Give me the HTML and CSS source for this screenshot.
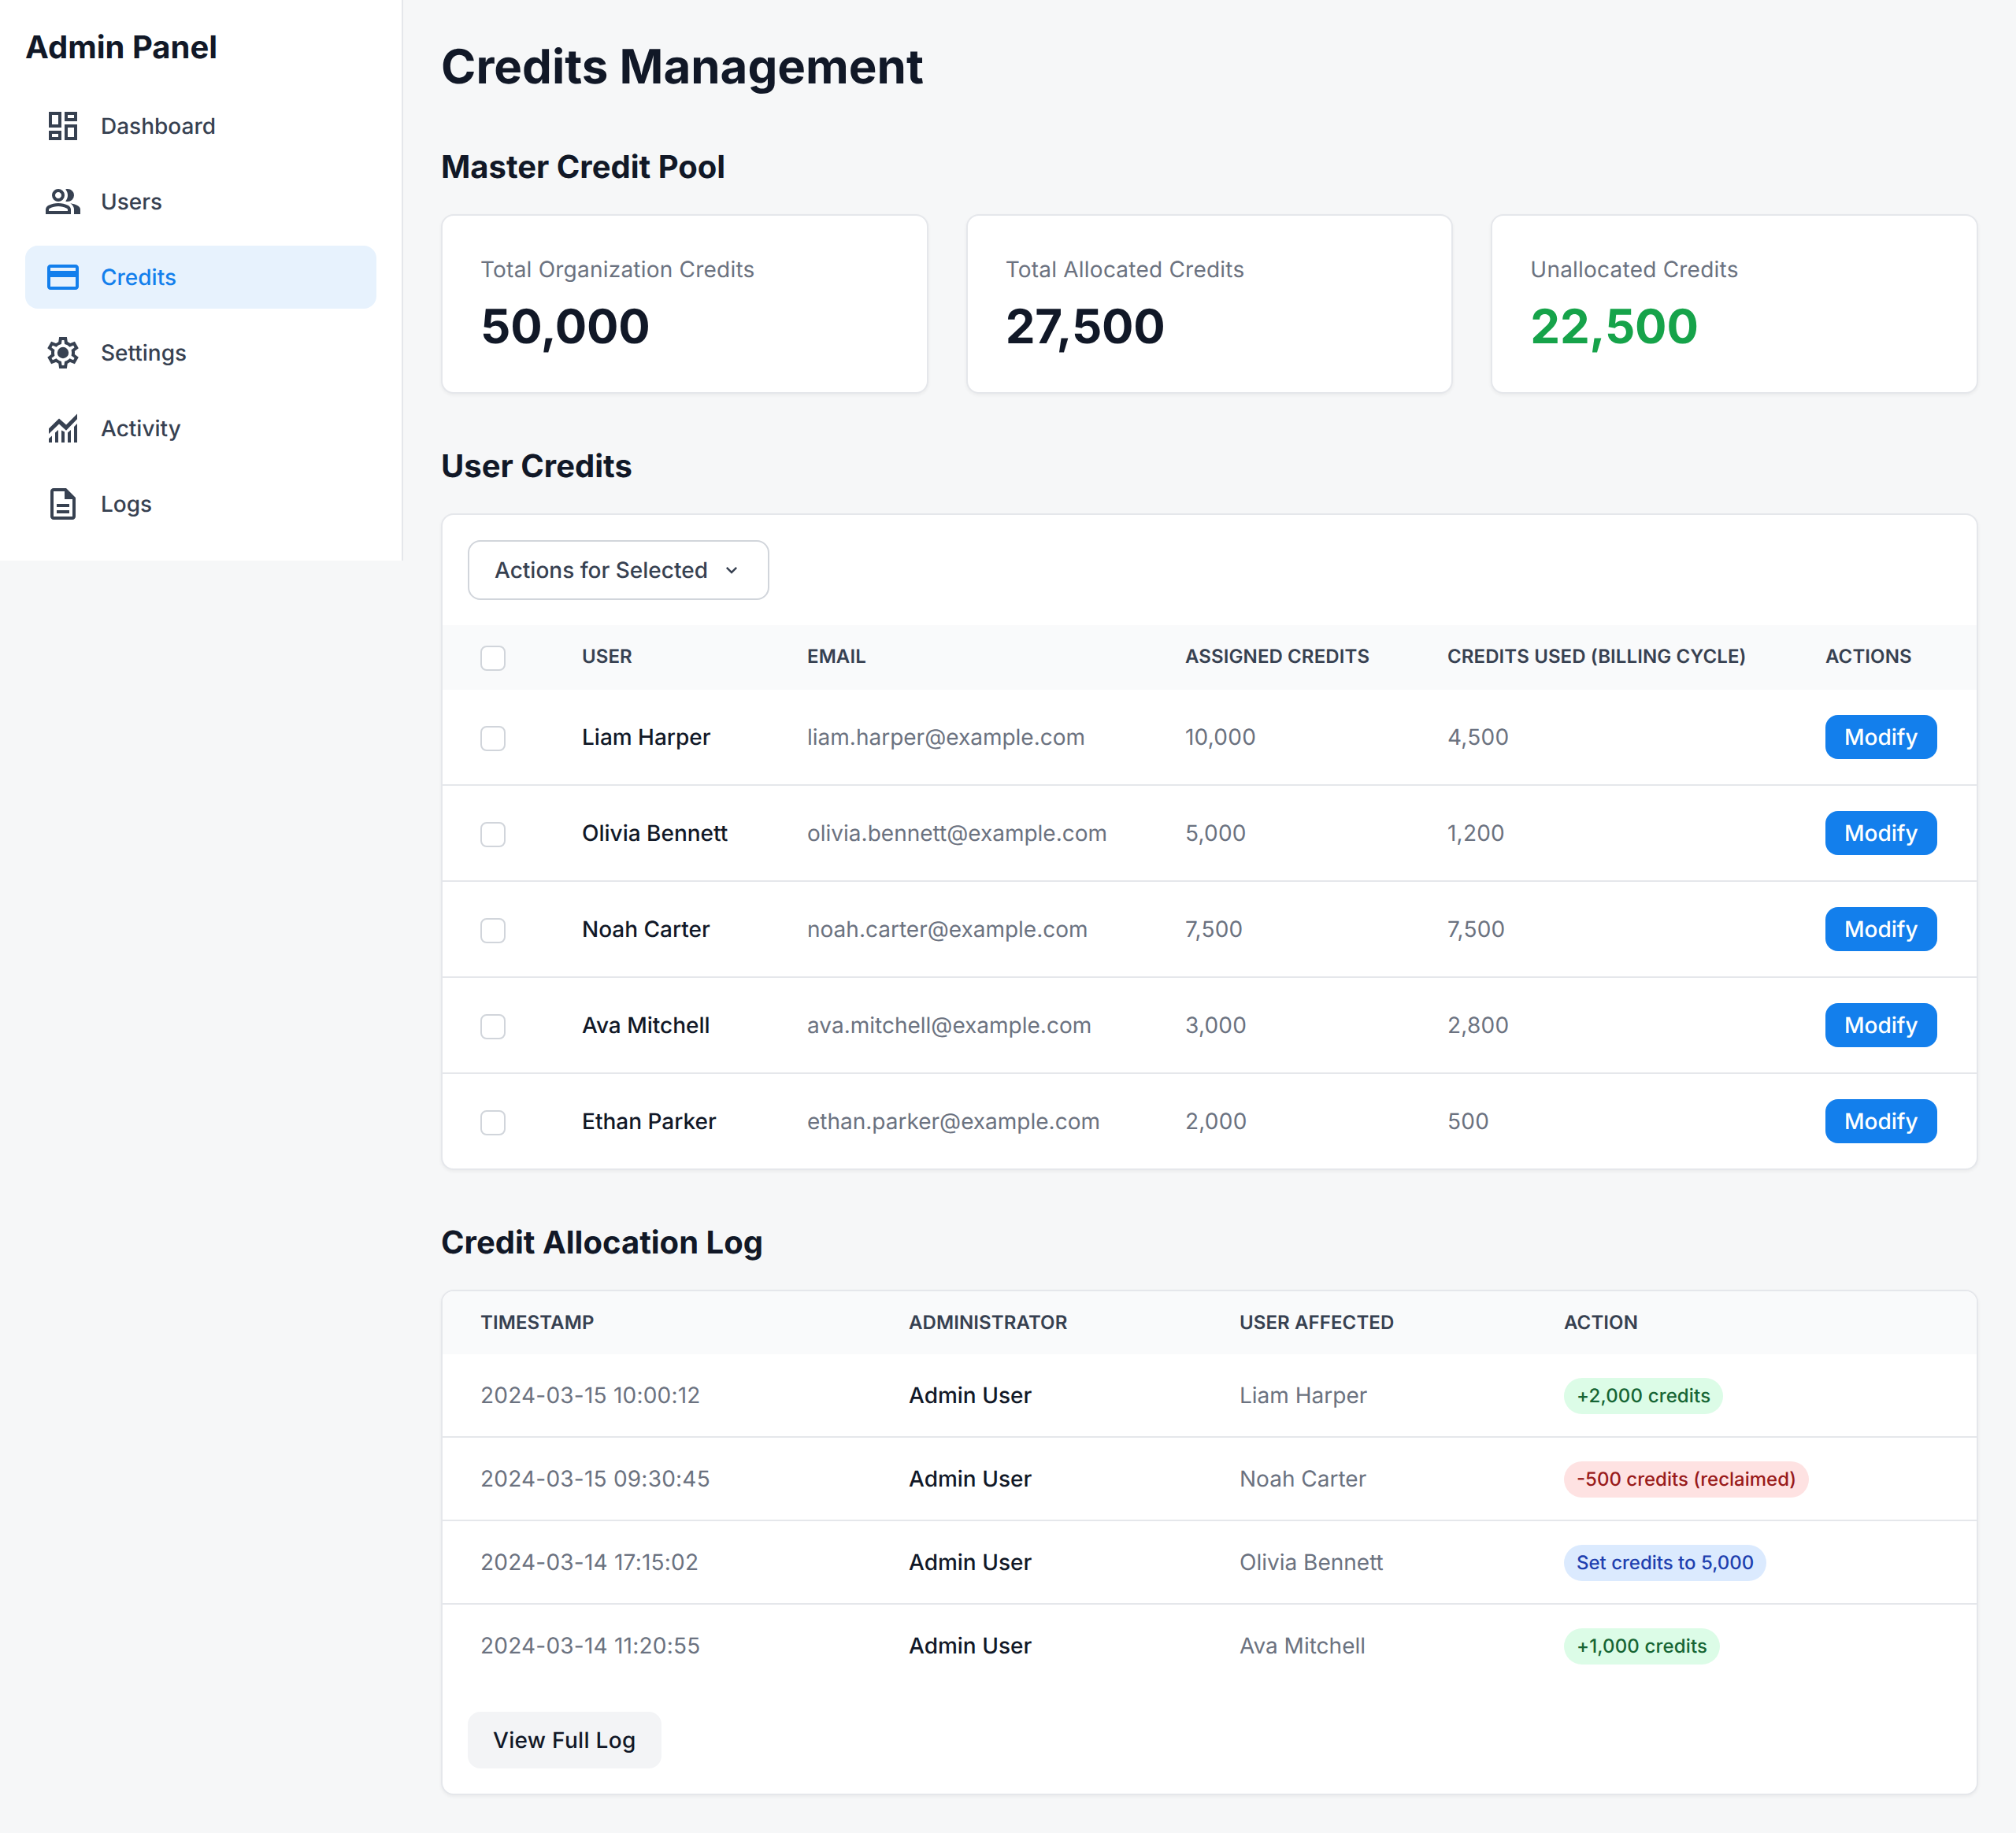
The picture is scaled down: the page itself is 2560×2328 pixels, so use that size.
FILE: index.html
```html
<!DOCTYPE html>
<html lang="en">
<head>
<meta charset="utf-8">
<title>Credits Management</title>
<link rel="stylesheet" href="styles.css">
</head>
<body>
<div class="layout">
  <aside class="sidebar">
    <div class="brand">Admin Panel</div>
    <nav class="nav">
      <a class="nav-item"><svg class="nav-icon" viewBox="0 0 24 24"><path d="M19 5v2h-4V5h4M9 5v6H5V5h4m10 8v6h-4v-6h4M9 17v2H5v-2h4M21 3h-8v6h8V3zM11 3H3v10h8V3zm10 8h-8v10h8V11zm-10 4H3v6h8v-6z"/></svg><span>Dashboard</span></a>
      <a class="nav-item"><svg class="nav-icon" viewBox="0 -960 960 960"><path d="M40-160v-112q0-34 17.5-62.5T104-378q62-31 126-46.5T360-440q66 0 130 15.5T616-378q29 15 46.5 43.5T680-272v112H40Zm720 0v-120q0-44-24.5-84.5T666-434q51 6 96 20.5t84 35.5q36 20 55 44.5t19 53.5v120H760ZM360-480q-66 0-113-47t-47-113q0-66 47-113t113-47q66 0 113 47t47 113q0 66-47 113t-113 47Zm400-160q0 66-47 113t-113 47q-11 0-28-2.5t-28-5.5q27-32 41.5-71t14.5-81q0-42-14.5-81T544-792q14-5 28-6.5t28-1.5q66 0 113 47t47 113ZM120-240h480v-32q0-11-5.5-20T580-306q-54-27-109-40.5T360-360q-56 0-111 13.5T140-306q-9 5-14.5 14t-5.5 20v32Zm240-320q33 0 56.5-23.5T440-640q0-33-23.5-56.5T360-720q-33 0-56.5 23.5T280-640q0 33 23.5 56.5T360-560Z"/></svg><span>Users</span></a>
      <a class="nav-item active"><svg class="nav-icon" viewBox="0 -960 960 960"><path d="M880-720v480q0 33-23.5 56.5T800-160H160q-33 0-56.5-23.5T80-240v-480q0-33 23.5-56.5T160-800h640q33 0 56.5 23.5T880-720ZM160-640h640v-80H160v80Zm0 160v240h640v-240H160Z"/></svg><span>Credits</span></a>
      <a class="nav-item"><svg class="nav-icon" viewBox="0 0 24 24"><path fill-rule="evenodd" d="M19.44 12.99l-.01.02c.04-.33.08-.67.08-1.01 0-.34-.03-.66-.07-.99l.01.02 2.44-1.92-2.43-4.22-2.87 1.16.01.01c-.52-.4-1.09-.74-1.71-1h.01L14.44 2H9.57l-.44 3.07h.01c-.62.26-1.19.6-1.71 1l.01-.01-2.88-1.17-2.44 4.22 2.44 1.92.01-.02c-.04.33-.07.65-.07.99 0 .34.03.68.08 1.01l-.01-.02-2.1 1.65-.33.26 2.43 4.2 2.88-1.15-.02-.04c.53.41 1.1.75 1.73 1.01h-.03L9.58 22h4.85s.03-.18.06-.42l.38-2.65h-.01c.62-.26 1.2-.6 1.73-1.01l-.02.04 2.88 1.15 2.43-4.2s-.14-.12-.33-.26l-2.11-1.66zM17.45 11.27c.04.31.05.52.05.73 0 .21-.02.43-.05.73l-.14 1.13.89.7 1.08.84-.7 1.21-1.27-.51-1.04-.42-.9.68c-.43.32-.84.56-1.25.73l-1.06.43-.16 1.13-.2 1.35h-1.4l-.19-1.35-.16-1.13-1.06-.43c-.43-.18-.83-.41-1.23-.71l-.91-.7-1.06.43-1.27.51-.7-1.21 1.08-.84.89-.7-.14-1.13c-.03-.31-.05-.54-.05-.74s.02-.43.05-.73l.14-1.13-.89-.7-1.08-.84.7-1.21 1.27.51 1.04.42.9-.68c.43-.32.84-.56 1.25-.73l1.06-.43.16-1.13.2-1.35h1.39l.19 1.35.16 1.13 1.06.43c.43.18.83.41 1.23.71l.91.7 1.06-.43 1.27-.51.7 1.21-1.07.85-.89.7.14 1.13z"/><circle cx="12" cy="12" r="3.6"/></svg><span>Settings</span></a>
      <a class="nav-item"><svg class="nav-icon" viewBox="0 -960 960 960"><path d="M120-120v-100l80-70v170h-80Zm160 0v-250l80-70v320h-80Zm160 0v-310l80 40v270h-80Zm160 0v-250l80-70v320h-80Zm160 0v-400l80-80v480h-80ZM120-340v-133l260-257 180 160 280-280v133L560-427 380-590 120-340Z"/></svg><span>Activity</span></a>
      <a class="nav-item"><svg class="nav-icon" viewBox="0 -960 960 960"><path d="M320-240h320v-80H320v80Zm0-160h320v-80H320v80ZM240-80q-33 0-56.5-23.5T160-160v-640q0-33 23.5-56.5T240-880h320l240 240v480q0 33-23.5 56.5T720-80H240Zm280-520v-200H240v640h480v-440H520ZM240-800v200-200 640-640Z"/></svg><span>Logs</span></a>
    </nav>
  </aside>
  <main class="main">
    <h1 class="page-title">Credits Management</h1>

    <h2 class="section-title">Master Credit Pool</h2>
    <section class="stats">
      <div class="card stat"><div class="stat-label">Total Organization Credits</div><div class="stat-value">50,000</div></div>
      <div class="card stat"><div class="stat-label">Total Allocated Credits</div><div class="stat-value">27,500</div></div>
      <div class="card stat"><div class="stat-label">Unallocated Credits</div><div class="stat-value positive">22,500</div></div>
    </section>

    <h2 class="section-title spaced">User Credits</h2>
    <section class="card">
      <div class="toolbar">
        <button class="btn-outline">Actions for Selected<svg class="chevron" viewBox="0 0 24 24"><path d="M16.59 8.59 12 13.17 7.41 8.59 6 10l6 6 6-6z"/></svg></button>
      </div>
      <table class="table users">
        <colgroup><col class="u1"><col class="u2"><col class="u3"><col class="u4"><col class="u5"><col class="u6"></colgroup>
        <thead><tr><th class="check-cell"><span class="check"></span></th><th>User</th><th>Email</th><th>Assigned Credits</th><th>Credits Used (Billing Cycle)</th><th>Actions</th></tr></thead>
        <tbody>
          <tr><td><span class="check"></span></td><td class="strong">Liam Harper</td><td>liam.harper@example.com</td><td class="num">10,000</td><td class="num">4,500</td><td><button class="btn-primary">Modify</button></td></tr>
          <tr><td><span class="check"></span></td><td class="strong">Olivia Bennett</td><td>olivia.bennett@example.com</td><td class="num">5,000</td><td class="num">1,200</td><td><button class="btn-primary">Modify</button></td></tr>
          <tr><td><span class="check"></span></td><td class="strong">Noah Carter</td><td>noah.carter@example.com</td><td class="num">7,500</td><td class="num">7,500</td><td><button class="btn-primary">Modify</button></td></tr>
          <tr><td><span class="check"></span></td><td class="strong">Ava Mitchell</td><td>ava.mitchell@example.com</td><td class="num">3,000</td><td class="num">2,800</td><td><button class="btn-primary">Modify</button></td></tr>
          <tr><td><span class="check"></span></td><td class="strong">Ethan Parker</td><td>ethan.parker@example.com</td><td class="num">2,000</td><td class="num">500</td><td><button class="btn-primary">Modify</button></td></tr>
        </tbody>
      </table>
    </section>

    <h2 class="section-title spaced">Credit Allocation Log</h2>
    <section class="card">
      <table class="table log">
        <colgroup><col class="l1"><col class="l2"><col class="l3"><col class="l4"></colgroup>
        <thead><tr><th>Timestamp</th><th>Administrator</th><th>User Affected</th><th>Action</th></tr></thead>
        <tbody>
          <tr><td class="num">2024-03-15 10:00:12</td><td class="strong">Admin User</td><td>Liam Harper</td><td><span class="badge green">+2,000 credits</span></td></tr>
          <tr><td class="num">2024-03-15 09:30:45</td><td class="strong">Admin User</td><td>Noah Carter</td><td><span class="badge red">-500 credits (reclaimed)</span></td></tr>
          <tr><td class="num">2024-03-14 17:15:02</td><td class="strong">Admin User</td><td>Olivia Bennett</td><td><span class="badge blue">Set credits to 5,000</span></td></tr>
          <tr><td class="num">2024-03-14 11:20:55</td><td class="strong">Admin User</td><td>Ava Mitchell</td><td><span class="badge green">+1,000 credits</span></td></tr>
        </tbody>
      </table>
      <div class="card-footer"><button class="btn-muted">View Full Log</button></div>
    </section>
  </main>
</div>
</body>
</html>
```
FILE: styles.css
```css
* { box-sizing: border-box; }
html, body { margin: 0; padding: 0; }
body {
  background: #f6f7f8;
  color: #111827;
  font-family: Inter, "Liberation Sans", sans-serif;
  font-size: 28px;
  text-rendering: geometricPrecision;
}
button { font-family: inherit; text-rendering: inherit; cursor: pointer; }

.layout { display: flex; align-items: flex-start; }

.sidebar {
  flex: 0 0 512px;
  width: 512px;
  padding: 32px;
  background: #fff;
  border-right: 2px solid #e5e7eb;
}
.brand {
  font-size: 40px;
  line-height: 56px;
  font-weight: 700;
  color: #111827;
  margin-bottom: 32px;
}
.nav { display: flex; flex-direction: column; gap: 16px; }
.nav-item {
  display: flex;
  align-items: center;
  gap: 24px;
  height: 80px;
  padding: 0 24px;
  border-radius: 16px;
  color: #374151;
  font-size: 28px;
  font-weight: 500;
}
.nav-icon { width: 48px; height: 48px; fill: currentColor; flex: none; }
.nav-item.active { background: #e7f2fd; color: #137fec; }

.main { flex: 1; min-width: 0; padding: 48px; }
.page-title {
  margin: 0 0 64px;
  padding-top: 1px;
  height: 72px;
  font-size: 60px;
  line-height: 72px;
  font-weight: 700;
  color: #111827;
}
.section-title {
  margin: 0 0 32px;
  font-size: 40px;
  line-height: 56px;
  font-weight: 700;
  color: #111827;
}
.section-title.spaced { margin-top: 64px; }

.card {
  background: #fff;
  border: 2px solid #e5e7eb;
  border-radius: 16px;
  box-shadow: 0 2px 4px rgba(0, 0, 0, .05);
  overflow: hidden;
}
.stats { display: grid; grid-template-columns: repeat(3, 1fr); gap: 48px; }
.stat { padding: 48px; height: 228px; }
.stat-label { font-size: 28px; line-height: 40px; color: #6b7280; letter-spacing: .22px; }
.stat-value {
  margin-top: 17px;
  font-size: 60px;
  line-height: 72px;
  font-weight: 700;
  color: #111827;
  letter-spacing: -.2px;
}
.stat-value.positive { color: #16a34a; }

.toolbar { padding: 32px; }
.btn-outline {
  display: inline-flex;
  align-items: center;
  gap: 16px;
  height: 76px;
  padding: 0 32px;
  background: #fff;
  border: 2px solid #d1d5db;
  border-radius: 16px;
  color: #374151;
  font-size: 28px;
  font-weight: 500;
}
.chevron { width: 28px; height: 28px; fill: currentColor; flex: none; }

.table { width: 100%; border-collapse: separate; border-spacing: 0; table-layout: fixed; }
.u1 { width: 129px; } .u2 { width: 286px; } .u3 { width: 480px; }
.u4 { width: 333px; } .u5 { width: 480px; } .u6 { width: 240px; }
.l1 { width: 544px; } .l2 { width: 420px; } .l3 { width: 412px; } .l4 { width: 572px; }

.table th {
  padding: 0 48px 4px;
  height: 82px;
  background: #f9fafb;
  text-align: left;
  font-size: 24px;
  font-weight: 600;
  color: #374151;
  text-transform: uppercase;
  letter-spacing: .1px;
  white-space: nowrap;
}
.table th.check-cell { padding-bottom: 2px; }
.table.log th { height: 80px; padding-bottom: 1px; }
.table td {
  padding: 0 48px;
  height: 122px;
  color: #6b7280;
  font-size: 28px;
  border-bottom: 2px solid #e5e7eb;
  white-space: nowrap;
}
.table tbody tr:last-child td { border-bottom: 0; height: 120px; }
.table.log td { height: 106px; }
.table.log tbody tr:last-child td { height: 104px; }
.table td.strong { color: #111827; font-weight: 500; }
.table td.num { letter-spacing: .22px; }

.check {
  display: block;
  width: 32px;
  height: 32px;
  margin-top: 4px;
  background: #fff;
  border: 2px solid #d1d5db;
  border-radius: 8px;
}
.btn-primary {
  display: block;
  height: 56px;
  padding: 0 24px;
  background: #137fec;
  border: 0;
  border-radius: 16px;
  color: #fff;
  font-size: 28px;
  font-weight: 500;
}
.badge {
  display: inline-block;
  margin-top: 2px;
  padding: 7px 16px;
  border-radius: 999px;
  font-size: 24px;
  line-height: 32px;
  font-weight: 500;
  vertical-align: middle;
}
.badge.green { background: #dcfce7; color: #166534; letter-spacing: .15px; }
.badge.red { background: #fee2e2; color: #991b1b; }
.badge.blue { background: #dbeafe; color: #1e40af; }

.card-footer { padding: 32px; }
.btn-muted {
  display: block;
  height: 72px;
  padding: 0 32px;
  background: #f3f4f6;
  border: 0;
  border-radius: 16px;
  color: #111827;
  font-size: 28px;
  font-weight: 500;
  letter-spacing: .3px;
}
```
